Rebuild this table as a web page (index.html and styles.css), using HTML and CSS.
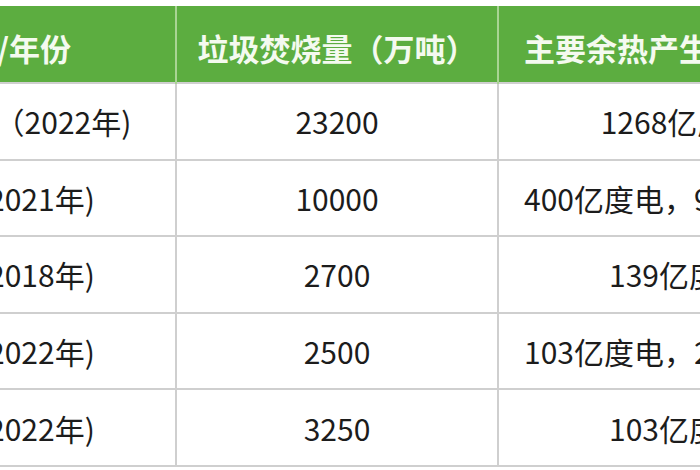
FILE: index.html
```html
<!DOCTYPE html>
<html lang="zh">
<head>
<meta charset="utf-8">
<link rel="stylesheet" href="styles.css">
</head>
<body>
<div class="frame">
  <table class="data">
    <colgroup>
      <col class="c1"><col class="c2"><col class="c3">
    </colgroup>
    <thead>
      <tr>
        <th>国家/年份</th>
        <th>垃圾焚烧量（万吨）</th>
        <th>主要余热产生（电量）</th>
      </tr>
    </thead>
    <tbody>
      <tr><td>中国大陆（2022年)</td><td>23200</td><td>1268亿度电</td></tr>
      <tr><td>美国 (2021年)</td><td>10000</td><td>400亿度电，900吨蒸汽</td></tr>
      <tr><td>日本 (2018年)</td><td>2700</td><td>139亿度电</td></tr>
      <tr><td>德国 (2022年)</td><td>2500</td><td>103亿度电，200吨蒸汽</td></tr>
      <tr><td>法国 (2022年)</td><td>3250</td><td>103亿度电</td></tr>
    </tbody>
  </table>
</div>
</body>
</html>
```

FILE: styles.css
```css
html, body {
  margin: 0;
  padding: 0;
  background: #ffffff;
}
.frame {
  width: 700px;
  height: 470px;
  overflow: hidden;
  padding-top: 6px;
  box-sizing: border-box;
}
.data {
  margin-left: -171px;
  border-collapse: collapse;
  table-layout: fixed;
  width: 1030px;
  font-family: "Noto Sans CJK SC", "Noto Sans", sans-serif;
  font-size: 30px;
  color: #1c1c1c;
}
.c1 { width: 346px; }
.c2 { width: 322px; }
.c3 { width: 362px; }
.data th {
  background: #5cad40;
  color: #f4faef;
  font-size: 31px;
  font-weight: 700;
  height: 70px;
  padding: 6px 0 0 0;
  text-align: center;
  white-space: nowrap;
  overflow: hidden;
  border-left: 2px solid #a9d494;
  border-right: 2px solid #a9d494;
}
.data td {
  height: 74.6px;
  padding: 0;
  text-align: center;
  white-space: nowrap;
  overflow: hidden;
  border: 2px solid #cfcfcf;
}
```
